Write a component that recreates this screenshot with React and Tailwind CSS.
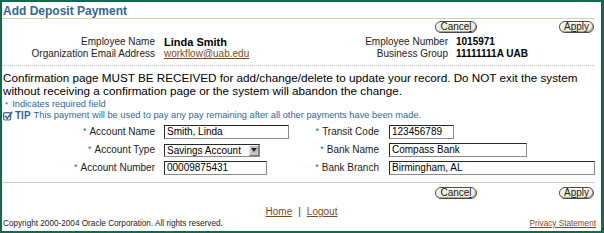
import React from "react";

const F = { fontFamily: '"Liberation Sans", Arial, sans-serif' };

function Btn({ children, w }) {
  return (
    <div
      className="h-[12px] rounded-[6px] border border-[#4a4a4a] bg-[#f3f1da] text-[10px] leading-[10px] text-[#222] flex items-center justify-center shadow-[inset_-1px_-1px_0_#a8a690,inset_1px_1px_0_#ffffff]"
      style={{ width: w }}
    >
      {children}
    </div>
  );
}

function Star() {
  return <span className="text-[#336699] text-[9px] mr-[3px] relative -top-[1px]">*</span>;
}

function Input({ w, value }) {
  return (
    <div
      className="h-[14px] border border-[#2a2a2a] border-r-[#8a8a8a] border-b-[#8a8a8a] bg-white text-[10px] leading-[12px] pl-[2px] text-black whitespace-nowrap overflow-hidden"
      style={{ width: w }}
    >
      {value}
    </div>
  );
}

function Row({ label, children, lw, gap }) {
  return (
    <div className="flex items-center h-[18px]">
      <div className="text-right text-[10px] text-[#222] whitespace-nowrap" style={{ width: lw, marginRight: gap }}>
        <Star />
        {label}
      </div>
      {children}
    </div>
  );
}

export default function App() {
  return (
    <div
      className="w-[604px] h-[233px] border-t-2 border-l-2 border-b-2 border-r-[3px] border-[#11694c] bg-white overflow-hidden flex flex-col"
      style={F}
    >
      <div className="h-[16px] pl-[1px] text-[12px] font-bold text-[#336699] leading-[18px] whitespace-nowrap">
        Add Deposit Payment
      </div>
      <div className="mr-[6px] h-[1px] bg-[#d4d2aa]" />
      <div className="flex justify-end pr-[7px] mt-[2px] gap-[82px]">
        <Btn w={42}>
          Cance<u>l</u>
        </Btn>
        <Btn w={35}>
          A<u>p</u>ply
        </Btn>
      </div>
      <div className="flex mt-[3px] text-[10px] leading-[12px]">
        <div className="w-[300px] flex flex-col">
          <div className="flex items-center h-[12px]">
            <div className="w-[153px] text-right text-[#222]">Employee Name</div>
            <div className="ml-[9px] font-bold text-[11px] text-black">Linda Smith</div>
          </div>
          <div className="flex items-center h-[12px]">
            <div className="w-[153px] text-right text-[#222]">Organization Email Address</div>
            <div className="ml-[9px] text-[#7b4a20] underline">workflow@uab.edu</div>
          </div>
        </div>
        <div className="flex flex-col">
          <div className="flex items-center h-[12px]">
            <div className="w-[146px] text-right text-[#222]">Employee Number</div>
            <div className="ml-[8px] font-bold text-black">1015971</div>
          </div>
          <div className="flex items-center h-[12px]">
            <div className="w-[146px] text-right text-[#222]">Business Group</div>
            <div className="ml-[8px] font-bold text-black">11111111A UAB</div>
          </div>
        </div>
      </div>
      <div className="mt-[5px] mr-[6px] border-t border-dotted border-[#bdbdbd]" />
      <div className="pl-[1px] mt-[5px] text-[11.7px] leading-[13px] text-black pr-[4px]">
        Confirmation page MUST BE RECEIVED for add/change/delete to update your record. Do NOT exit the system
        without receiving a confirmation page or the system will abandon the change.
      </div>
      <div className="pl-[3px] mt-[2px] text-[9.3px] leading-[11px] text-[#336699]">
        <span className="text-[8px] mr-[4px]">*</span>Indicates required field
      </div>
      <div className="pl-[1px] text-[9.3px] leading-[11px] text-[#336699] flex items-center whitespace-nowrap">
        <svg width="10" height="10" viewBox="0 0 10 10" className="mr-[2px]">
          <rect x="0.6" y="1.6" width="7" height="7.4" fill="none" stroke="#336699" strokeWidth="1.2" rx="1.5" />
          <path d="M2.2 4.8 L4.2 7.4 L9.2 0.8" fill="none" stroke="#336699" strokeWidth="1.6" />
        </svg>
        <b className="mr-[3px] text-[10px]">TIP</b>This payment will be used to pay any pay remaining after all other payments have been made.
      </div>
      <div className="flex mt-[2px]">
        <div className="flex flex-col w-[287px]">
          <Row label="Account Name" lw={153} gap={9}>
            <Input w={125} value="Smith, Linda" />
          </Row>
          <Row label="Account Type" lw={153} gap={9}>
            <div className="h-[13px] w-[96px] border border-[#2a2a2a] border-r-[#8a8a8a] border-b-[#8a8a8a] flex items-center text-[10px] leading-[11px] bg-white">
              <span className="flex-1 pl-[2px] whitespace-nowrap">Savings Account</span>
              <span className="w-[10px] h-[11px] bg-[#c4c4c4] border border-[#777] border-l-[#eee] border-t-[#eee] flex items-center justify-center">
                <svg width="6" height="4" viewBox="0 0 6 4">
                  <path d="M0 0 L6 0 L3 4 Z" fill="#222" />
                </svg>
              </span>
            </div>
          </Row>
          <Row label="Account Number" lw={153} gap={9}>
            <Input w={103} value="00009875431" />
          </Row>
        </div>
        <div className="flex flex-col">
          <Row label="Transit Code" lw={90} gap={10}>
            <Input w={65} value="123456789" />
          </Row>
          <Row label="Bank Name" lw={90} gap={10}>
            <Input w={138} value="Compass Bank" />
          </Row>
          <Row label="Bank Branch" lw={90} gap={10}>
            <Input w={206} value="Birmingham, AL" />
          </Row>
        </div>
      </div>
      <div className="mt-[5px] mr-[6px] h-[1px] bg-[#d4d2aa]" />
      <div className="flex justify-end pr-[7px] mt-[4px] gap-[82px]">
        <Btn w={42}>
          Cance<u>l</u>
        </Btn>
        <Btn w={35}>
          A<u>p</u>ply
        </Btn>
      </div>
      <div className="text-center text-[10px] mt-[7px] leading-[12px]">
        <span className="text-[#7b4a20] underline">Home</span>
        <span className="mx-[6px] text-[#333]">|</span>
        <span className="text-[#7b4a20] underline">Logout</span>
      </div>
      <div className="flex justify-between items-end pl-[1px] pr-[5px] mt-[1px] text-[8.2px] leading-[10px]">
        <span className="text-[#222]">Copyright 2000-2004 Oracle Corporation. All rights reserved.</span>
        <span className="text-[#7b4a20] underline">Privacy Statement</span>
      </div>
    </div>
  );
}
